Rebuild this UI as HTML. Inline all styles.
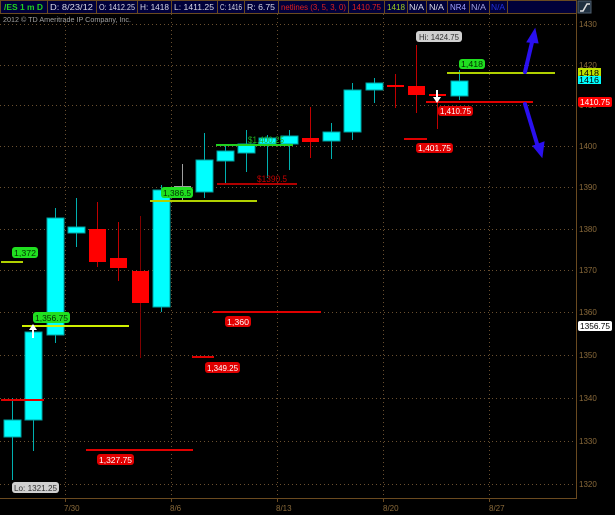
<!DOCTYPE html>
<html><head><meta charset="utf-8"><style>
html,body{margin:0;padding:0;background:#000;width:615px;height:515px;overflow:hidden}
svg{display:block}
text{font-family:"Liberation Sans","DejaVu Sans",sans-serif}
</style></head><body>
<svg width="615" height="515" viewBox="0 0 615 515" xmlns="http://www.w3.org/2000/svg">
<rect width="615" height="515" fill="#000"/>
<rect x="0" y="0" width="577" height="14" fill="#00003a"/>
<g stroke="#6a4a20" stroke-width="1" fill="none">
<rect x="0.5" y="0.5" width="576" height="13"/>
<line x1="47.5" y1="0" x2="47.5" y2="14"/><line x1="96.5" y1="0" x2="96.5" y2="14"/>
<line x1="137.5" y1="0" x2="137.5" y2="14"/><line x1="171.5" y1="0" x2="171.5" y2="14"/>
<line x1="217.5" y1="0" x2="217.5" y2="14"/><line x1="244.5" y1="0" x2="244.5" y2="14"/>
<line x1="278.5" y1="0" x2="278.5" y2="14"/><line x1="348.5" y1="0" x2="348.5" y2="14"/>
<line x1="384.5" y1="0" x2="384.5" y2="14"/><line x1="407.5" y1="0" x2="407.5" y2="14"/>
<line x1="426.5" y1="0" x2="426.5" y2="14"/><line x1="447.5" y1="0" x2="447.5" y2="14"/>
<line x1="469.5" y1="0" x2="469.5" y2="14"/><line x1="489.5" y1="0" x2="489.5" y2="14"/>
<line x1="507.5" y1="0" x2="507.5" y2="14"/>
</g>
<g font-size="8.5" fill="#d8d8e8" lengthAdjust="spacingAndGlyphs">
<text x="4" y="10" fill="#20d020" font-weight="bold" textLength="39" lengthAdjust="spacingAndGlyphs">/ES 1 m D</text>
<text x="50" y="10" textLength="43" lengthAdjust="spacingAndGlyphs">D: 8/23/12</text>
<text x="99" y="10" textLength="36" lengthAdjust="spacingAndGlyphs">O: 1412.25</text>
<text x="140" y="10" textLength="29" lengthAdjust="spacingAndGlyphs">H: 1418</text>
<text x="174" y="10" textLength="40" lengthAdjust="spacingAndGlyphs">L: 1411.25</text>
<text x="220" y="10" textLength="22" lengthAdjust="spacingAndGlyphs">C: 1416</text>
<text x="247" y="10" textLength="28" lengthAdjust="spacingAndGlyphs">R: 6.75</text>
<text x="281" y="10" fill="#e02020" textLength="65" lengthAdjust="spacingAndGlyphs">netlines (3, 5, 3, 0)</text>
<text x="352" y="10" fill="#e02020" textLength="29" lengthAdjust="spacingAndGlyphs">1410.75</text>
<text x="387" y="10" fill="#a0d020" textLength="18" lengthAdjust="spacingAndGlyphs">1418</text>
<text x="409" y="10" textLength="15" lengthAdjust="spacingAndGlyphs">N/A</text>
<text x="429" y="10" textLength="15" lengthAdjust="spacingAndGlyphs">N/A</text>
<text x="450" y="10" fill="#a0a0ff" textLength="16" lengthAdjust="spacingAndGlyphs">NR4</text>
<text x="471" y="10" fill="#a0a0e0" textLength="15" lengthAdjust="spacingAndGlyphs">N/A</text>
<text x="491" y="10" fill="#2030e0" textLength="14" lengthAdjust="spacingAndGlyphs">N/A</text>
</g>
<rect x="578" y="1" width="13" height="12" fill="#203040" stroke="#506070"/>
<path d="M580,11 L583,11 L587,4 L590,4" stroke="#e0e0e0" stroke-width="1.5" fill="none"/>
<text x="3" y="22" font-size="7" fill="#a0a0a0" textLength="128" lengthAdjust="spacingAndGlyphs">2012 © TD Ameritrade IP Company, Inc.</text>
<g stroke="#6a5030" stroke-width="1" stroke-dasharray="1,3">
<line x1="0" y1="24.5" x2="575" y2="24.5"/><line x1="0" y1="65.5" x2="575" y2="65.5"/>
<line x1="0" y1="105.5" x2="575" y2="105.5"/><line x1="0" y1="146.5" x2="575" y2="146.5"/>
<line x1="0" y1="187.5" x2="575" y2="187.5"/><line x1="0" y1="229.5" x2="575" y2="229.5"/>
<line x1="0" y1="270.5" x2="575" y2="270.5"/><line x1="0" y1="312.5" x2="575" y2="312.5"/>
<line x1="0" y1="355.5" x2="575" y2="355.5"/><line x1="0" y1="398.5" x2="575" y2="398.5"/>
<line x1="0" y1="441.5" x2="575" y2="441.5"/><line x1="0" y1="484.5" x2="575" y2="484.5"/>
<line x1="65.5" y1="14" x2="65.5" y2="498"/><line x1="171.5" y1="14" x2="171.5" y2="498"/>
<line x1="277.5" y1="14" x2="277.5" y2="498"/><line x1="383.5" y1="14" x2="383.5" y2="498"/>
<line x1="489.5" y1="14" x2="489.5" y2="498"/>
</g>
<g stroke="#6a4a20" stroke-width="1">
<line x1="576.5" y1="14" x2="576.5" y2="498"/><line x1="0" y1="498.5" x2="577" y2="498.5"/>
<line x1="65.5" y1="498" x2="65.5" y2="502"/><line x1="171.5" y1="498" x2="171.5" y2="502"/>
<line x1="277.5" y1="498" x2="277.5" y2="502"/><line x1="383.5" y1="498" x2="383.5" y2="502"/>
<line x1="489.5" y1="498" x2="489.5" y2="502"/>
</g>
<g font-size="8" fill="#8a6a3a">
<text x="579" y="27">1430</text><text x="579" y="68">1420</text><text x="579" y="108">1410</text>
<text x="579" y="149">1400</text><text x="579" y="190">1390</text><text x="579" y="232">1380</text>
<text x="579" y="273">1370</text><text x="579" y="315">1360</text><text x="579" y="358">1350</text>
<text x="579" y="401">1340</text><text x="579" y="444">1330</text><text x="579" y="487">1320</text>
<text x="64" y="511">7/30</text><text x="170" y="511">8/6</text><text x="276" y="511">8/13</text>
<text x="383" y="511">8/20</text><text x="489" y="511">8/27</text>
</g>
<g stroke-width="1">
<line x1="12.5" y1="398" x2="12.5" y2="480" stroke="#00b0b0"/>
<line x1="33.5" y1="327" x2="33.5" y2="451" stroke="#00b0b0"/>
<line x1="55.5" y1="208" x2="55.5" y2="343" stroke="#00b0b0"/>
<line x1="76.5" y1="198" x2="76.5" y2="247" stroke="#00b0b0"/>
<line x1="97.5" y1="202" x2="97.5" y2="267" stroke="#c00000"/>
<line x1="118.5" y1="222" x2="118.5" y2="281" stroke="#c00000"/>
<line x1="140.5" y1="216" x2="140.5" y2="358" stroke="#800000"/>
<line x1="161.5" y1="185" x2="161.5" y2="312" stroke="#00b0b0"/>
<line x1="182.5" y1="164" x2="182.5" y2="200" stroke="#a0a0a0"/>
<line x1="204.5" y1="133" x2="204.5" y2="198" stroke="#00b0b0"/>
<line x1="225.5" y1="145" x2="225.5" y2="185" stroke="#00b0b0"/>
<line x1="246.5" y1="130" x2="246.5" y2="172" stroke="#00b0b0"/>
<line x1="267.5" y1="135" x2="267.5" y2="178" stroke="#00b0b0"/>
<line x1="289.5" y1="130" x2="289.5" y2="170" stroke="#00b0b0"/>
<line x1="310.5" y1="107" x2="310.5" y2="158" stroke="#c00000"/>
<line x1="331.5" y1="123" x2="331.5" y2="159" stroke="#00b0b0"/>
<line x1="352.5" y1="83" x2="352.5" y2="140" stroke="#00b0b0"/>
<line x1="374.5" y1="78" x2="374.5" y2="103" stroke="#00b0b0"/>
<line x1="395.5" y1="74" x2="395.5" y2="108" stroke="#c00000"/>
<line x1="416.5" y1="45" x2="416.5" y2="113" stroke="#c00000"/>
<line x1="437.5" y1="92" x2="437.5" y2="129" stroke="#c00000"/>
<line x1="459.5" y1="70" x2="459.5" y2="100" stroke="#00b0b0"/>
</g>
<g fill="#00ffff" stroke="#00a0a0">
<rect x="4" y="420" width="17" height="17"/>
<rect x="25" y="332" width="17" height="88"/>
<rect x="47" y="218" width="17" height="117"/>
<rect x="68" y="227" width="17" height="6"/>
<rect x="153" y="190" width="17" height="117"/>
<rect x="196" y="160" width="17" height="32"/>
<rect x="217" y="151" width="17" height="10"/>
<rect x="238" y="144" width="17" height="9"/>
<rect x="259" y="138" width="17" height="6"/>
<rect x="281" y="136" width="17" height="8"/>
<rect x="323" y="132" width="17" height="9"/>
<rect x="344" y="90" width="17" height="42"/>
<rect x="366" y="83" width="17" height="7"/>
<rect x="451" y="81" width="17" height="15"/>
</g>
<g fill="#ff0000">
<rect x="89" y="229" width="17" height="33"/>
<rect x="110" y="258" width="17" height="10"/>
<rect x="132" y="271" width="17" height="32"/>
<rect x="302" y="138" width="17" height="4"/>
<rect x="387" y="85" width="17" height="2"/>
<rect x="408" y="86" width="17" height="9"/>
<rect x="429" y="94" width="17" height="2"/>
</g>
<rect x="174" y="186" width="17" height="3" fill="#a0a0a0"/>
<g stroke-width="2">
<line x1="1" y1="262" x2="23" y2="262" stroke="#b0d000"/>
<line x1="22" y1="326" x2="129" y2="326" stroke="#d0f000"/>
<line x1="150" y1="201" x2="257" y2="201" stroke="#b0d000"/>
<line x1="216" y1="145" x2="293" y2="145" stroke="#20d020"/>
<line x1="217" y1="184" x2="297" y2="184" stroke="#b00000"/>
<line x1="213" y1="312" x2="321" y2="312" stroke="#e00000"/>
<line x1="192" y1="357" x2="214" y2="357" stroke="#e00000"/>
<line x1="1" y1="400" x2="44" y2="400" stroke="#e00000"/>
<line x1="86" y1="450" x2="193" y2="450" stroke="#e00000"/>
<line x1="404" y1="139" x2="427" y2="139" stroke="#e00000"/>
<line x1="426" y1="102" x2="533" y2="102" stroke="#e00000"/>
<line x1="447" y1="73" x2="555" y2="73" stroke="#b0d000"/>
</g>
<text x="248" y="143" font-size="9" fill="#20b020" textLength="36" lengthAdjust="spacingAndGlyphs">$1,400.25</text>
<text x="257" y="182" font-size="9" fill="#c00000" textLength="30" lengthAdjust="spacingAndGlyphs">$1390.5</text>
<g font-size="8">
<rect x="12" y="247" width="26" height="11" rx="3" fill="#20e020"/><text x="14" y="256" fill="#003000" textLength="22" lengthAdjust="spacingAndGlyphs">1,372</text>
<rect x="33" y="312" width="37" height="11" rx="3" fill="#20e020"/><text x="35" y="321" fill="#003000" textLength="33" lengthAdjust="spacingAndGlyphs">1,356.75</text>
<rect x="161" y="187" width="32" height="11" rx="3" fill="#20e020"/><text x="163" y="196" fill="#003000" textLength="28" lengthAdjust="spacingAndGlyphs">1,386.5</text>
<rect x="459" y="59" width="26" height="10" rx="3" fill="#20e020"/><text x="461" y="67" fill="#003000" textLength="22" lengthAdjust="spacingAndGlyphs">1,418</text>
<rect x="225" y="316" width="26" height="11" rx="3" fill="#e00000"/><text x="227" y="325" fill="#fff" textLength="22" lengthAdjust="spacingAndGlyphs">1,360</text>
<rect x="205" y="362" width="35" height="11" rx="3" fill="#e00000"/><text x="207" y="371" fill="#fff" textLength="31" lengthAdjust="spacingAndGlyphs">1,349.25</text>
<rect x="97" y="454" width="37" height="11" rx="3" fill="#e00000"/><text x="99" y="463" fill="#fff" textLength="33" lengthAdjust="spacingAndGlyphs">1,327.75</text>
<rect x="416" y="143" width="37" height="10" rx="3" fill="#e00000"/><text x="418" y="151" fill="#fff" textLength="33" lengthAdjust="spacingAndGlyphs">1,401.75</text>
<rect x="438" y="106" width="35" height="10" rx="3" fill="#e00000"/><text x="440" y="114" fill="#fff" textLength="31" lengthAdjust="spacingAndGlyphs">1,410.75</text>
<rect x="416" y="31" width="46" height="11" rx="3" fill="#d0d0d0"/><text x="419" y="40" fill="#303030" textLength="40" lengthAdjust="spacingAndGlyphs">Hi: 1424.75</text>
<rect x="12" y="482" width="47" height="11" rx="3" fill="#d0d0d0"/><text x="14" y="491" fill="#303030" textLength="43" lengthAdjust="spacingAndGlyphs">Lo: 1321.25</text>
<rect x="578" y="68" width="23" height="9" fill="#c0e000"/><text x="579" y="76" fill="#000" textLength="20" lengthAdjust="spacingAndGlyphs">1418</text>
<rect x="578" y="76" width="23" height="8" fill="#00ffff"/><text x="579" y="83" fill="#000" textLength="20" lengthAdjust="spacingAndGlyphs">1416</text>
<rect x="578" y="97" width="34" height="10" rx="2" fill="#ff0000"/><text x="580" y="105" fill="#fff" textLength="30" lengthAdjust="spacingAndGlyphs">1410.75</text>
<rect x="578" y="321" width="34" height="10" rx="2" fill="#fff"/><text x="580" y="329" fill="#000" textLength="30" lengthAdjust="spacingAndGlyphs">1356.75</text>
</g>
<path d="M33,324 L29,330 L32,330 L32,338 L34,338 L34,330 L37,330 Z" fill="#fff"/>
<path d="M437,103 L433,97 L436,97 L436,90 L438,90 L438,97 L441,97 Z" fill="#fff"/>
<g stroke="#2a10f0" stroke-width="4" fill="#2a10f0" stroke-linecap="round">
<line x1="525" y1="72" x2="533" y2="38"/>
<path d="M535,29 L527,42 L538,43 Z" stroke-width="1"/>
<line x1="525" y1="104" x2="538" y2="147"/>
<path d="M542,157 L533,146 L544,142 Z" stroke-width="1"/>
</g>
</svg>
</body></html>
